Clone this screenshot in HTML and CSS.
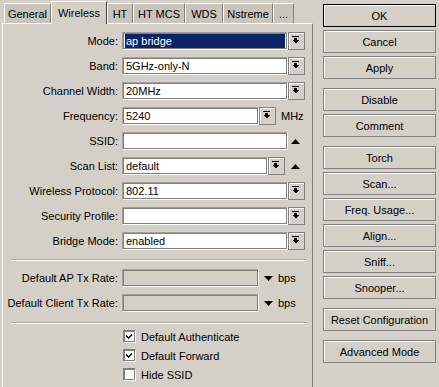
FILE: index.html
```html
<!DOCTYPE html>
<html>
<head>
<meta charset="utf-8">
<link rel="stylesheet" href="styles.css">
</head>
<body>
<div class="app">
  <div class="left">
    <div class="tabs">
      <div class="tab w-general">General</div>
      <div class="tab active w-wireless">Wireless</div>
      <div class="tab w-ht">HT</div>
      <div class="tab w-htmcs">HT MCS</div>
      <div class="tab w-wds">WDS</div>
      <div class="tab w-nstreme">Nstreme</div>
      <div class="tab w-more">...</div>
    </div>
    <div class="panel">
      <div class="group">
        <div class="row"><div class="lbl">Mode:</div><div class="field full"><span class="selval">ap bridge</span></div><div class="dd"><svg width="15" height="16" viewBox="0 0 15 16"><rect x="3" y="3" width="7" height="1"/><rect x="5" y="5" width="3" height="2"/><path d="M3 7h7l-3.5 3.5z"/></svg></div></div>
        <div class="row"><div class="lbl">Band:</div><div class="field full">5GHz-only-N</div><div class="dd"><svg width="15" height="16" viewBox="0 0 15 16"><rect x="3" y="3" width="7" height="1"/><rect x="5" y="5" width="3" height="2"/><path d="M3 7h7l-3.5 3.5z"/></svg></div></div>
        <div class="row"><div class="lbl">Channel Width:</div><div class="field full">20MHz</div><div class="dd"><svg width="15" height="16" viewBox="0 0 15 16"><rect x="3" y="3" width="7" height="1"/><rect x="5" y="5" width="3" height="2"/><path d="M3 7h7l-3.5 3.5z"/></svg></div></div>
        <div class="row"><div class="lbl">Frequency:</div><div class="field short">5240</div><div class="dd"><svg width="15" height="16" viewBox="0 0 15 16"><rect x="3" y="3" width="7" height="1"/><rect x="5" y="5" width="3" height="2"/><path d="M3 7h7l-3.5 3.5z"/></svg></div><div class="unit">MHz</div></div>
        <div class="row"><div class="lbl">SSID:</div><div class="field full"></div><svg class="tri up" width="9" height="5" viewBox="0 0 9 5"><path d="M0 5h9L4.5 0z"/></svg></div>
        <div class="row"><div class="lbl">Scan List:</div><div class="field mid">default</div><div class="dd"><svg width="15" height="16" viewBox="0 0 15 16"><rect x="3" y="3" width="7" height="1"/><rect x="5" y="5" width="3" height="2"/><path d="M3 7h7l-3.5 3.5z"/></svg></div><svg class="tri up" width="9" height="5" viewBox="0 0 9 5"><path d="M0 5h9L4.5 0z"/></svg></div>
        <div class="row"><div class="lbl">Wireless Protocol:</div><div class="field full">802.11</div><div class="dd"><svg width="15" height="16" viewBox="0 0 15 16"><rect x="3" y="3" width="7" height="1"/><rect x="5" y="5" width="3" height="2"/><path d="M3 7h7l-3.5 3.5z"/></svg></div></div>
        <div class="row"><div class="lbl">Security Profile:</div><div class="field full"></div><div class="dd"><svg width="15" height="16" viewBox="0 0 15 16"><rect x="3" y="3" width="7" height="1"/><rect x="5" y="5" width="3" height="2"/><path d="M3 7h7l-3.5 3.5z"/></svg></div></div>
        <div class="row"><div class="lbl">Bridge Mode:</div><div class="field full">enabled</div><div class="dd"><svg width="15" height="16" viewBox="0 0 15 16"><rect x="3" y="3" width="7" height="1"/><rect x="5" y="5" width="3" height="2"/><path d="M3 7h7l-3.5 3.5z"/></svg></div></div>
      </div>
      <div class="sep sep1"></div>
      <div class="group tx">
        <div class="row"><div class="lbl">Default AP Tx Rate:</div><div class="field short disabled"></div><svg class="tri down" width="9" height="5" viewBox="0 0 9 5"><path d="M0 0h9L4.5 5z"/></svg><div class="unit">bps</div></div>
        <div class="row"><div class="lbl">Default Client Tx Rate:</div><div class="field short disabled"></div><svg class="tri down" width="9" height="5" viewBox="0 0 9 5"><path d="M0 0h9L4.5 5z"/></svg><div class="unit">bps</div></div>
      </div>
      <div class="sep sep2"></div>
      <div class="checks">
        <div class="chk"><div class="box"><svg width="11" height="11" viewBox="0 0 11 11"><path d="M2 4l2 2 4-4v2l-4 4-2-2z"/></svg></div><span>Default Authenticate</span></div>
        <div class="chk"><div class="box"><svg width="11" height="11" viewBox="0 0 11 11"><path d="M2 4l2 2 4-4v2l-4 4-2-2z"/></svg></div><span>Default Forward</span></div>
        <div class="chk"><div class="box"></div><span>Hide SSID</span></div>
      </div>
    </div>
  </div>
  <div class="btns">
    <div class="btn def">OK</div>
    <div class="btn">Cancel</div>
    <div class="btn">Apply</div>
    <div class="btn gap">Disable</div>
    <div class="btn">Comment</div>
    <div class="btn gap">Torch</div>
    <div class="btn">Scan...</div>
    <div class="btn">Freq. Usage...</div>
    <div class="btn">Align...</div>
    <div class="btn">Sniff...</div>
    <div class="btn">Snooper...</div>
    <div class="btn gap">Reset Configuration</div>
    <div class="btn gap">Advanced Mode</div>
  </div>
</div>
</body>
</html>
```
FILE: styles.css
```css
* { box-sizing: border-box; margin: 0; padding: 0; }
html, body { width: 439px; height: 387px; overflow: hidden; }
body {
  background: #d4d0c8;
  font-family: "Liberation Sans", Arial, sans-serif;
  font-size: 11px;
  color: #000;
}
.app { display: flex; height: 387px; }
.left { width: 311px; margin-left: 2px; display: flex; flex-direction: column; }

.tabs { display: flex; align-items: flex-end; height: 23px; padding-left: 2px; }
.tab {
  height: 20px;
  border-top: 1px solid #fff;
  border-left: 1px solid #fff;
  border-right: 1px solid #808080;
  background: #c9c5bd;
  display: flex;
  align-items: center;
  justify-content: center;
  padding-top: 1px;
  white-space: nowrap;
}
.tab.active {
  height: 23px;
  margin-bottom: -1px;
  position: relative;
  z-index: 1;
  background: #d4d0c8;
  border-right-color: #404040;
  padding-bottom: 2px;
}
.w-general { width: 47px; }
.w-wireless { width: 56px; }
.w-ht { width: 26px; }
.w-htmcs { width: 52px; }
.w-wds { width: 38px; }
.w-nstreme { width: 50px; }
.w-more { width: 21px; }

.panel {
  flex: 1;
  border-top: 1px solid #fff;
  border-left: 1px solid #fff;
  border-right: 1px solid #808080;
  padding-top: 8px;
}
.group { display: flex; flex-direction: column; gap: 7px; }
.row { display: flex; align-items: center; height: 18px; }
.lbl { width: 115px; margin-right: 4px; text-align: right; white-space: nowrap; }

.field {
  height: 18px;
  background: #fff;
  border: 1px solid;
  border-color: #a0a0a0 #fff #fff #a0a0a0;
  box-shadow: inset 0 0 0 1px #808080;
  padding: 0 3px;
  display: flex;
  align-items: center;
  white-space: nowrap;
  overflow: hidden;
}
.field.full { width: 166px; }
.field.short { width: 137px; }
.field.mid { width: 146px; }
.field.disabled { background: #d4d0c8; }
.selval {
  display: flex;
  align-items: center;
  margin: 0 -1px;
  height: 14px;
  flex: 1;
  background: #0a246a;
  color: #fff;
  padding-left: 1px;
}

.dd {
  width: 17px;
  height: 18px;
  margin-left: 0;
  border: 1px solid #808080;
  box-shadow: inset 1px 1px 0 #fff;
  background: #d4d0c8;
  display: flex;
}
.dd svg { display: block; fill: #000; shape-rendering: crispEdges; }
.unit { margin-left: 5px; }
.tri { display: block; fill: #000; }
.tri.up { margin-left: 3px; }
.tri.down { margin-left: 5px; }
.field.mid + .dd + .tri.up { margin-left: 6px; }

.sep {
  height: 2px;
  border-top: 1px solid #aaa69e;
  border-bottom: 1px solid #fff;
  margin-left: 8px;
  margin-right: 6px;
}
.sep1 { margin-top: 9px; }
.tx { margin-top: 8px; }
.sep2 { margin-top: 10px; }

.checks { display: flex; flex-direction: column; gap: 6px; margin-top: 6px; }
.chk { display: flex; align-items: center; height: 13px; padding-left: 120px; }
.box {
  width: 13px;
  height: 13px;
  background: #fff;
  border: 1px solid;
  border-color: #808080 #fff #fff #808080;
  box-shadow: inset 0 0 0 1px #808080;
  margin-right: 5px;
}
.box svg { display: block; fill: #000; shape-rendering: crispEdges; margin: 0; }

.btns { display: flex; flex-direction: column; margin-left: 10px; width: 113px; padding-top: 4px; }
.btn {
  height: 23px;
  margin-bottom: 3px;
  border: 1px solid #808080;
  box-shadow: inset 1px 1px 0 #fff;
  display: flex;
  align-items: center;
  justify-content: center;
  white-space: nowrap;
}
.btn.def { border-color: #000; }
.btn.gap { margin-top: 6px; }
```
